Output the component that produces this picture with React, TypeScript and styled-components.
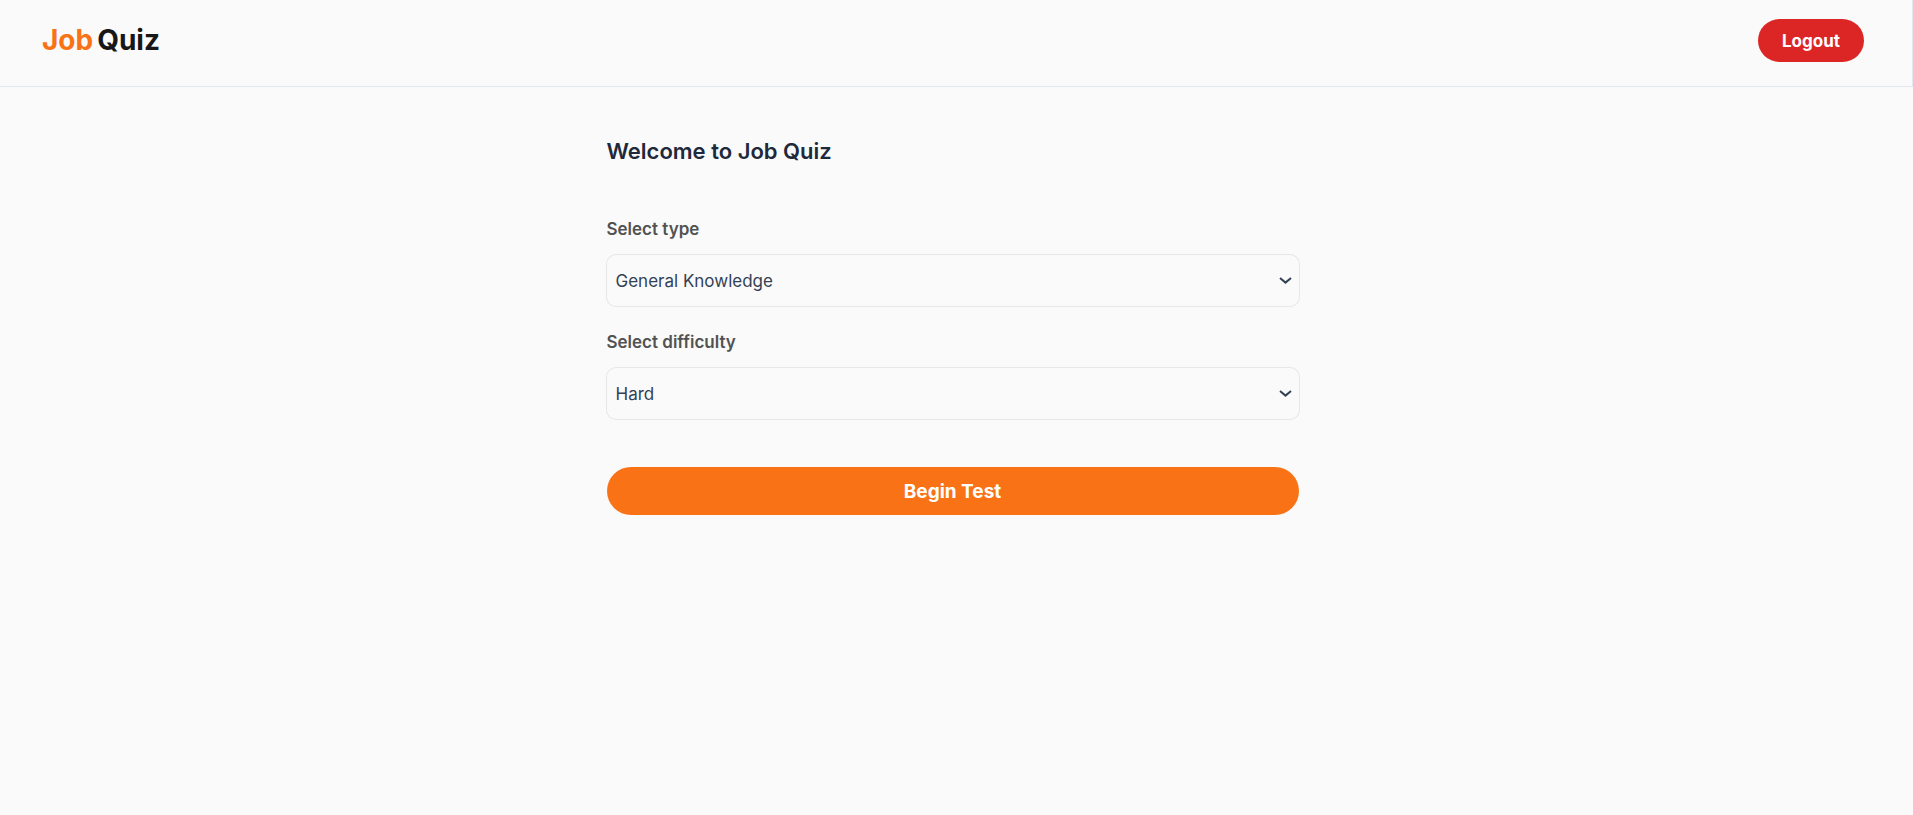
import React from "react";
import styled, { createGlobalStyle } from "styled-components";

const GlobalStyle = createGlobalStyle`
  *, *::before, *::after { box-sizing: border-box; }
  body {
    margin: 0;
    background: #fafafa;
    color: #1e293b;
    font-family: Inter, "Liberation Sans", sans-serif;
    font-size: 17px;
    line-height: 26px;
  }
`;

const Header = styled.header`
  display: flex;
  align-items: flex-start;
  justify-content: space-between;
  padding: 19px 48px 24px 42px;
  border-bottom: 1px solid #e2e8f0;
  border-right: 1px solid #e2e8f0;
`;

const Logo = styled.a`
  display: flex;
  gap: 4px;
  color: #171717;
  font-size: 28px;
  font-weight: 700;
  line-height: 42px;
  text-decoration: none;
`;

const Accent = styled.span`
  color: #f97316;
`;

const Button = styled.button`
  border: 0;
  border-radius: 9999px;
  color: #fff;
  font-family: inherit;
  font-weight: 700;
  cursor: pointer;
`;

const LogoutButton = styled(Button)`
  height: 43px;
  padding: 0 24px;
  background: #dc2626;
  font-size: 17px;
`;

const BeginButton = styled(Button)`
  width: 100%;
  height: 48px;
  margin-top: 25px;
  background: #f97316;
  font-size: 19px;
`;

const Main = styled.main`
  padding: 48px 8px 48px 0;
`;

const Form = styled.form`
  display: flex;
  flex-direction: column;
  gap: 23px;
  width: 100%;
  max-width: 692px;
  margin: 0 auto;
`;

const Title = styled.h1`
  margin: 0 0 26px;
  font-size: 22px;
  font-weight: 600;
  line-height: 32px;
`;

const Field = styled.div`
  display: flex;
  flex-direction: column;
  gap: 13px;
`;

const Label = styled.label`
  color: #525252;
  font-weight: 600;
`;

const SelectWrap = styled.div`
  display: grid;
  align-items: center;
  > * { grid-area: 1 / 1; }
`;

const Select = styled.select`
  appearance: none;
  width: 100%;
  height: 51px;
  padding: 0 32px 0 9px;
  border: 0;
  border-radius: 9px;
  box-shadow: 0 0 0 1px #e5e7eb;
  background: transparent;
  color: #334155;
  font: inherit;
`;

const Chevron = styled.svg`
  justify-self: end;
  margin-right: 7px;
  pointer-events: none;
`;

interface SelectFieldProps {
  id: string;
  label: string;
  options: string[];
}

function SelectField({ id, label, options }: SelectFieldProps) {
  return (
    <Field>
      <Label htmlFor={id}>{label}</Label>
      <SelectWrap>
        <Select id={id}>
          {options.map((option) => (
            <option key={option}>{option}</option>
          ))}
        </Select>
        <Chevron
          width="13"
          height="7"
          viewBox="0 0 13 7"
          fill="none"
          stroke="#334155"
          strokeWidth="2"
          aria-hidden="true"
        >
          <path d="M1 1l5.5 4.6L12 1" />
        </Chevron>
      </SelectWrap>
    </Field>
  );
}

export default function App() {
  return (
    <>
      <GlobalStyle />
      <Header>
        <Logo href="#">
          <Accent>Job</Accent>
          <span>Quiz</span>
        </Logo>
        <LogoutButton type="button">Logout</LogoutButton>
      </Header>
      <Main>
        <Form onSubmit={(event) => event.preventDefault()}>
          <Title>Welcome to Job Quiz</Title>
          <SelectField id="type" label="Select type" options={["General Knowledge"]} />
          <SelectField id="difficulty" label="Select difficulty" options={["Hard", "Medium", "Easy"]} />
          <BeginButton type="submit">Begin Test</BeginButton>
        </Form>
      </Main>
    </>
  );
}
